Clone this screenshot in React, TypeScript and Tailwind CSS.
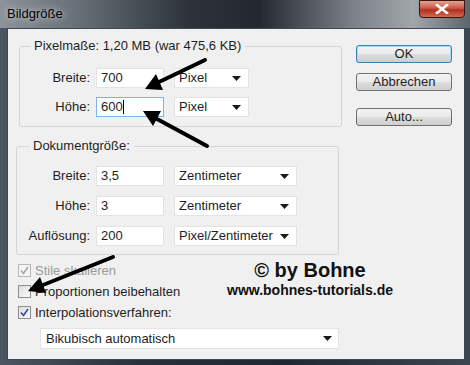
const font = 'font-["Tahoma","Liberation_Sans",Arial,sans-serif]'

function Caret() {
  return (
    <svg width="9" height="5" viewBox="0 0 9 5" className="shrink-0">
      <polygon points="0,0 9,0 4.5,5" fill="#1a1a1a" />
    </svg>
  )
}

function Field({ label, value, unit, labelW, selW, focus }: { label: string; value: string; unit: string; labelW: string; selW: string; focus?: boolean }) {
  return (
    <div className="flex items-center h-[20px]">
      <span className={`${labelW} text-right pr-[6px] text-[13px] text-[#1e1e1e]`}>{label}</span>
      <div
        className={`w-[68px] h-[20px] bg-white border ${
          focus ? 'border-[#7eb4ea]' : 'border-[#e3e3e3]'
        } flex items-center pl-[4px] text-[13px] text-[#1e1e1e]`}
      >
        {value}
        {focus && <span className="w-px h-[14px] bg-black" />}
      </div>
      <div className={`ml-[10px] ${selW} h-[20px] bg-white border border-[#e3e3e3] flex items-center justify-between pl-[4px] pr-[7px] text-[13px] text-[#1e1e1e]`}>
        <span>{unit}</span>
        <Caret />
      </div>
    </div>
  )
}

function Check({ label, checked, disabled }: { label: string; checked?: boolean; disabled?: boolean }) {
  return (
    <div className="flex items-center h-[21px]">
      <div
        className={`w-[13px] h-[13px] border ${
          disabled ? 'border-[#b8b8b8] bg-[#f4f4f4]' : 'border-[#8f8f8f] bg-[linear-gradient(135deg,#dcdcdc,#fbfbfb)]'
        } flex items-center justify-center`}
      >
        {checked && (
          <svg width="9" height="9" viewBox="0 0 9 9">
            <path d="M1 4.5 L3.5 7.5 L8 1" fill="none" stroke={disabled ? '#a8a8a8' : '#2a4f9e'} strokeWidth="1.6" />
          </svg>
        )}
      </div>
      <span className={`ml-[4px] text-[13px] ${disabled ? 'text-[#9a9a9a]' : 'text-[#1e1e1e]'}`}>{label}</span>
    </div>
  )
}

function Btn({ children, primary }: { children: React.ReactNode; primary?: boolean }) {
  return (
    <div
      className={`w-[96px] h-[18px] rounded-[3px] border ${
        primary ? 'border-[#3c7fb1] shadow-[inset_0_0_0_1px_#a6dcf6]' : 'border-[#707070]'
      } bg-[linear-gradient(#f2f2f2,#ebebeb_50%,#dddddd_51%,#cfcfcf)] flex items-center justify-center text-[13px] text-[#1e1e1e]`}
    >
      {children}
    </div>
  )
}

export default function App() {
  return (
    <div className={`relative w-[470px] h-[365px] overflow-hidden flex flex-col bg-[linear-gradient(90deg,#4a5662,#27313b_30%,#1f2831_60%,#3a4650)] ${font}`}>
      {/* Title bar */}
      <div className="h-[28px] flex items-start justify-between bg-[linear-gradient(90deg,#8d9399,#6b737b_15%,#2c333b_40%,#22282f_55%,#7b8188_75%,#a1a6ab_88%,#5c646c)]">
        <span className="mt-[4px] ml-[7px] text-[13px] text-black [text-shadow:0_0_6px_#e8eaec]">Bildgröße</span>
        <div className="mr-[5px] w-[46px] h-[18px] rounded-b-[4px] border border-[#3a1511] bg-[linear-gradient(#e7a192,#c8594a_45%,#b02f1e_55%,#d06a4e)] flex items-center justify-center">
          <svg width="14" height="10" viewBox="0 0 14 10">
            <path d="M2 1 L12 9 M12 1 L2 9" stroke="#fff" strokeWidth="2.6" strokeLinecap="square" />
          </svg>
        </div>
      </div>

      {/* Client area */}
      <div className="ml-[7px] mr-[5px] mb-[5px] flex-1 border border-[#3b4751] bg-[#f0f0f0] flex">
        <div className="w-[335px] flex flex-col">
          <fieldset className="ml-[11px] mt-[9px] w-[323px] border border-[#d5d5d5] rounded-[3px] pb-[9px]">
            <legend className="ml-[10px] px-[4px] text-[13px] text-[#1e1e1e] leading-[16px]">Pixelmaße: 1,20 MB (war 475,6 KB)</legend>
            <div className="mt-[14px] flex flex-col gap-[9px]">
              <Field label="Breite:" value="700" unit="Pixel" labelW="w-[76px]" selW="w-[75px]" />
              <Field label="Höhe:" value="600" unit="Pixel" labelW="w-[76px]" selW="w-[75px]" focus />
            </div>
          </fieldset>

          <fieldset className="ml-[8px] mt-[11px] w-[323px] border border-[#d5d5d5] rounded-[3px] pb-[8px]">
            <legend className="ml-[12px] px-[4px] text-[13px] text-[#1e1e1e] leading-[16px]">Dokumentgröße:</legend>
            <div className="mt-[12px] flex flex-col gap-[10px]">
              <Field label="Breite:" value="3,5" unit="Zentimeter" labelW="w-[79px]" selW="w-[123px]" />
              <Field label="Höhe:" value="3" unit="Zentimeter" labelW="w-[79px]" selW="w-[123px]" />
              <Field label="Auflösung:" value="200" unit="Pixel/Zentimeter" labelW="w-[79px]" selW="w-[123px]" />
            </div>
          </fieldset>

          <div className="ml-[10px] mt-[5px] flex flex-col">
            <Check label="Stile skalieren" checked disabled />
            <Check label="Proportionen beibehalten" />
            <Check label="Interpolationsverfahren:" checked />
          </div>

          <div className="ml-[32px] mt-[5px] w-[299px] h-[21px] bg-white border border-[#e3e3e3] flex items-center justify-between pl-[5px] pr-[6px] text-[13px] text-[#1e1e1e]">
            <span>Bikubisch automatisch</span>
            <Caret />
          </div>
        </div>

        <div className="ml-[13px] mt-[16px] flex flex-col">
          <Btn primary>OK</Btn>
          <div className="mt-[10px]">
            <Btn>Abbrechen</Btn>
          </div>
          <div className="mt-[17px]">
            <Btn>Auto...</Btn>
          </div>
        </div>
      </div>

      {/* Watermark */}
      <div className="absolute left-[220px] top-[258px] w-[180px] flex flex-col items-center font-['Liberation_Sans',Arial,sans-serif] font-bold text-[#111]">
        <span className="text-[20px] leading-[24px]">© by Bohne</span>
        <span className="text-[14px] leading-[18px] -mt-[1px]">www.bohnes-tutorials.de</span>
      </div>

      {/* Arrows */}
      <svg className="absolute inset-0 pointer-events-none" width="470" height="365" viewBox="0 0 470 365">
        <g fill="#000" stroke="#000" strokeWidth="4" strokeLinecap="round">
          <line x1="205" y1="60" x2="159" y2="82" />
          <line x1="207" y1="146" x2="157" y2="119" />
          <line x1="113" y1="257" x2="43" y2="285" />
        </g>
        <g fill="#000">
          <polygon points="145,89 163,90 156,74" />
          <polygon points="143,111 161,111 153,126" />
          <polygon points="28,291 46,293 40,277" />
        </g>
      </svg>
    </div>
  )
}
